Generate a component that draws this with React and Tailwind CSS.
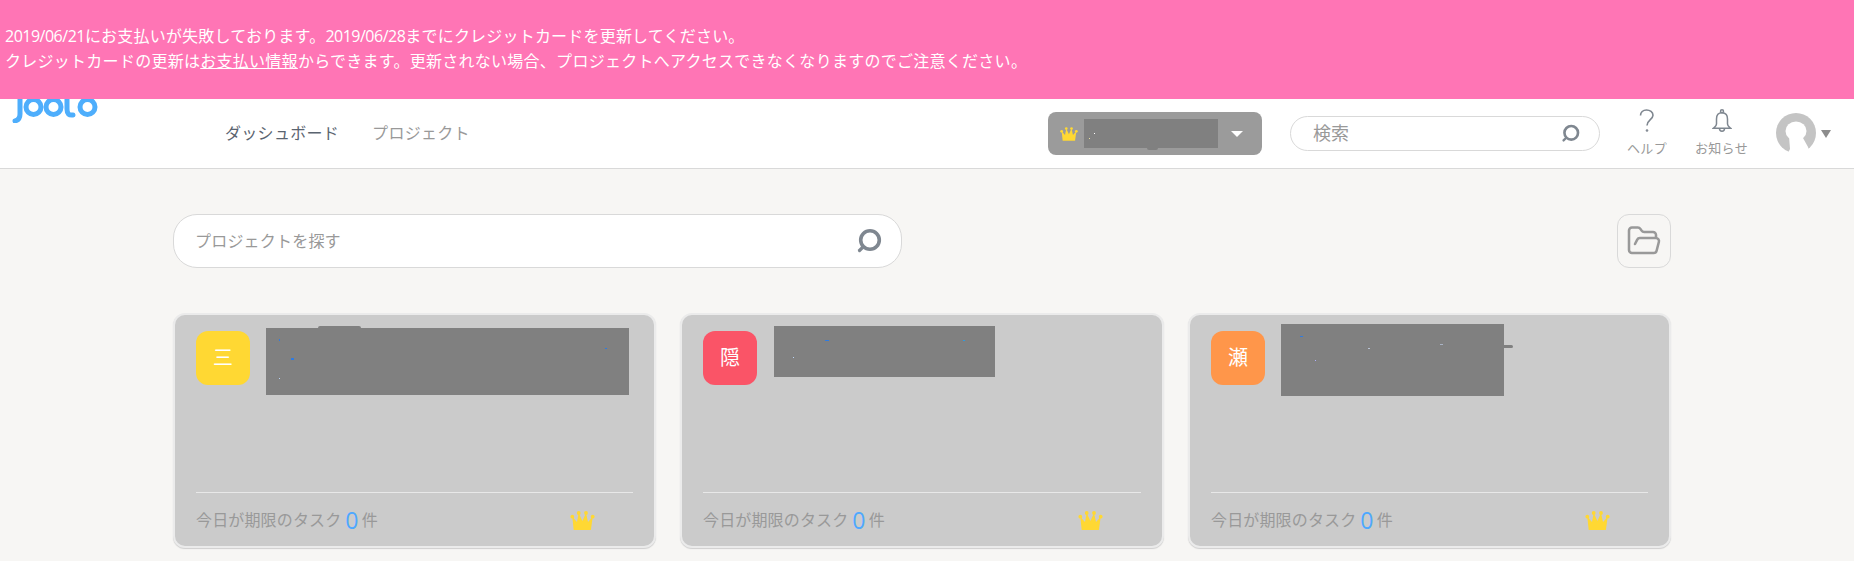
import React from 'react';
import { FolderOpen } from 'lucide-react';

const projects = [
  {
    initial: '三',
    color: 'bg-[#ffd833]',
    box: 'ml-[16px] -mt-[3px] w-[363px] h-[67px]',
    specks: [
      'left-[13px] top-[11px] w-px h-[2px] bg-[#2f7be0]',
      'left-[25px] top-[30px] w-[3px] h-[2px] bg-[#2f7be0]',
      'left-[339px] top-[20px] w-[2px] h-px bg-[#2f7be0]',
      'left-[13px] top-[50px] w-px h-px bg-[#b9d3f5]',
    ],
    extra: '-top-[2px] left-[52px] w-[43px] h-[2px] rounded-t-[2px]',
  },
  {
    initial: '隠',
    color: 'bg-[#fa5467]',
    box: 'ml-[17px] -mt-[5px] w-[221px] h-[51px]',
    specks: [
      'left-[51px] top-[14px] w-[4px] h-px bg-[#2f7be0]',
      'left-[189px] top-[14px] w-[2px] h-px bg-[#2f9be0]',
      'left-[19px] top-[31px] w-px h-px bg-[#b9d3f5]',
    ],
  },
  {
    initial: '瀬',
    color: 'bg-[#ff964a]',
    box: 'ml-[16px] -mt-[7px] w-[223px] h-[72px]',
    specks: [
      'left-[19px] top-[12px] w-[3px] h-px bg-[#2f7be0]',
      'left-[34px] top-[36px] w-px h-px bg-[#b0b0ff]',
      'left-[87px] top-[24px] w-[2px] h-px bg-[#b9c3d5]',
      'left-[159px] top-[20px] w-[3px] h-px bg-[#a9b3c5]',
    ],
    extra: 'top-[21px] left-full w-[9px] h-[3px] rounded-r-[2px]',
  },
];

const Crown = ({ className }) => (
  <svg viewBox="0 0 25 19" className={className} fill="#ffd833">
    <path d="M3.7 19 2.3 5.7 7 11 8.7 2 12.4 10 16 2 18 11 22.7 5.7 20.9 19Z" />
    <circle cx="2.3" cy="5.7" r="1.9" />
    <circle cx="8.7" cy="2" r="1.9" />
    <circle cx="16" cy="2" r="1.9" />
    <circle cx="22.7" cy="5.7" r="1.9" />
  </svg>
);

const SearchIcon = ({ className }) => (
  <svg viewBox="0 0 26 26" className={className} fill="none" stroke="#7f8790">
    <circle cx="14" cy="12" r="9.3" strokeWidth="3.6" />
    <path d="M6.5 19.5 3.5 22.5" strokeWidth="3.2" strokeLinecap="round" />
  </svg>
);

const Logo = () => (
  <svg viewBox="0 0 90 24" className="ml-[10px] h-[24px] w-[90px] shrink-0 self-start" fill="none" stroke="#4eaefc" strokeWidth="5" strokeLinecap="round">
    <path d="M10 -5V15C10 20 7 21.5 5 22" />
    <circle cx="23.5" cy="8" r="7.5" />
    <circle cx="43.5" cy="8" r="7.5" />
    <path d="M57 -5V10C57 15 59 16.5 63 16" />
    <circle cx="77.5" cy="8" r="7.5" />
  </svg>
);

const Card = ({ project }) => (
  <div className="flex h-[235px] flex-col rounded-[12px] border-2 border-[#ebebeb] bg-[#cbcbcb] px-[21px] pt-[16px] shadow-[0_1px_1px_#cfcfcf]">
    <div className="flex items-start">
      <div className={`flex h-[54px] w-[54px] shrink-0 items-center justify-center rounded-[12px] text-[20px] text-white ${project.color}`}>
        {project.initial}
      </div>
      <div className={`relative bg-[#808080] ${project.box}`}>
        {project.specks.map((speck) => (
          <span key={speck} className={`absolute ${speck}`} />
        ))}
        {project.extra && <span className={`absolute bg-[#808080] ${project.extra}`} />}
      </div>
    </div>
    <div className="mt-auto flex h-[54px] items-center border-t border-[#e8e8e8] pt-[1px] text-[16px] tracking-[0.15px] text-[#999999]">
      <span>今日が期限のタスク</span>
      <span className="ml-[4px] text-[23px] font-medium leading-none text-[#4ea8ff]">0</span>
      <span className="ml-[3px]">件</span>
      <Crown className="ml-auto mr-[38px] h-[19px] w-[25px]" />
    </div>
  </div>
);

export default function App() {
  return (
    <div className="h-[561px] overflow-hidden bg-[#f7f6f4] font-['Open_Sans','Noto_Sans_CJK_JP',sans-serif]">
      <div className="flex h-[99px] flex-col justify-center bg-[#ff75b5] pb-[2px] pl-[5px] text-[16px] leading-[25px] text-white">
        <p className="tracking-[0.2px]">
          <span className="tracking-[-0.5px]">2019/06/21</span>にお支払いが失敗しております。<span className="tracking-[-0.5px]">2019/06/28</span>までにクレジットカードを更新してください。
        </p>
        <p className="tracking-[0.27px]">
          クレジットカードの更新は<a className="underline">お支払い情報</a>からできます。更新されない場合、プロジェクトへアクセスできなくなりますのでご注意ください。
        </p>
      </div>

      <header className="flex h-[70px] items-center border-b border-[#d9d9d9] bg-white">
        <Logo />
        <nav className="mb-[2px] ml-[125px] flex gap-[33px] text-[16px] tracking-[0.3px]">
          <span className="text-[#5a6470]">ダッシュボード</span>
          <span className="text-[#999999]">プロジェクト</span>
        </nav>

        <div className="ml-auto flex items-center pr-[23px]">
          <div className="relative flex h-[43px] w-[214px] items-center rounded-[8px] bg-[#9b9b9b] pl-[12px]">
            <Crown className="h-[14px] w-[18px]" />
            <div className="relative ml-[6px] h-[29px] w-[134px] bg-[#808080]">
              <span className="absolute left-[10px] top-[14px] h-px w-px bg-white" />
              <span className="absolute left-[5px] top-[19px] h-px w-px bg-[#e8e0a0]" />
              <span className="absolute left-[63px] top-full h-[2px] w-[11px] rounded-b-[2px] bg-[#808080]" />
            </div>
            <span className="ml-[13px] h-0 w-0 border-x-[6px] border-t-[6px] border-x-transparent border-t-white" />
          </div>

          <div className="ml-[28px] flex h-[35px] w-[310px] items-center justify-between rounded-full border border-[#d9d9d9] bg-white pl-[22px] pr-[19px]">
            <span className="text-[18px] text-[#999999]">検索</span>
            <SearchIcon className="h-[19px] w-[19px]" />
          </div>

          <div className="ml-[27px] flex w-[40px] flex-col items-center">
            <svg viewBox="0 0 16 24" className="h-[24px] w-[16px]" fill="none" stroke="#7f8790" strokeWidth="1.6">
              <path d="M1.5 6.5C1.5 3.2 4 1 7.5 1S14 3.2 14 6.3C14 10.5 8 11 8 16.5" />
              <circle cx="8" cy="21.5" r="1" fill="#7f8790" strokeWidth="0.6" />
            </svg>
            <span className="mt-[5px] whitespace-nowrap text-[13px] leading-[20px] tracking-[0.4px] text-[#999999]">ヘルプ</span>
          </div>

          <div className="ml-[28px] flex w-[53px] flex-col items-center">
            <svg viewBox="0 0 20 24" className="h-[24px] w-[20px]" fill="none" stroke="#7f8790" strokeWidth="1.5">
              <circle cx="10" cy="2.3" r="1.5" />
              <path d="M10 3.8C6 3.8 4.5 6.5 4.5 10V15C4.5 17 3 18 1.5 19.2H18.5C17 18 15.5 17 15.5 15V10C15.5 6.5 14 3.8 10 3.8Z" />
              <path d="M7.5 19.5C7.5 23 12.5 23 12.5 19.5" />
            </svg>
            <span className="mt-[5px] whitespace-nowrap text-[13px] leading-[20px] tracking-[0.3px] text-[#999999]">お知らせ</span>
          </div>

          <svg viewBox="0 0 40 40" className="mb-[1px] ml-[28px] h-[40px] w-[40px]">
            <circle cx="20" cy="20" r="20" fill="#c4c4c4" />
            <ellipse cx="20" cy="18" rx="10.5" ry="9.5" fill="#ffffff" />
            <path d="M13 23 14 36 12 40H34L32 34 27 25Z" fill="#ffffff" />
          </svg>
          <span className="ml-[5px] h-0 w-0 border-x-[5px] border-t-[8px] border-x-transparent border-t-[#8c8c8c]" />
        </div>
      </header>

      <main className="ml-[173px] w-[1498px] pt-[45px]">
        <div className="flex items-center justify-between">
          <div className="flex h-[54px] w-[729px] items-center justify-between rounded-[24px] border border-[#d9d9d9] bg-white pl-[21px] pr-[19px]">
            <span className="text-[16px] tracking-[0.2px] text-[#999999]">プロジェクトを探す</span>
            <SearchIcon className="h-[26px] w-[26px]" />
          </div>
          <button className="flex h-[54px] w-[54px] items-center justify-center rounded-[12px] border border-[#d9d9d9]">
            <FolderOpen className="h-[36px] w-[36px] text-[#999999]" strokeWidth={1.7} />
          </button>
        </div>

        <div className="mt-[45px] grid grid-cols-[483px_484px_483px] gap-[24px]">
          {projects.map((project) => (
            <Card key={project.initial} project={project} />
          ))}
        </div>
      </main>
    </div>
  );
}
